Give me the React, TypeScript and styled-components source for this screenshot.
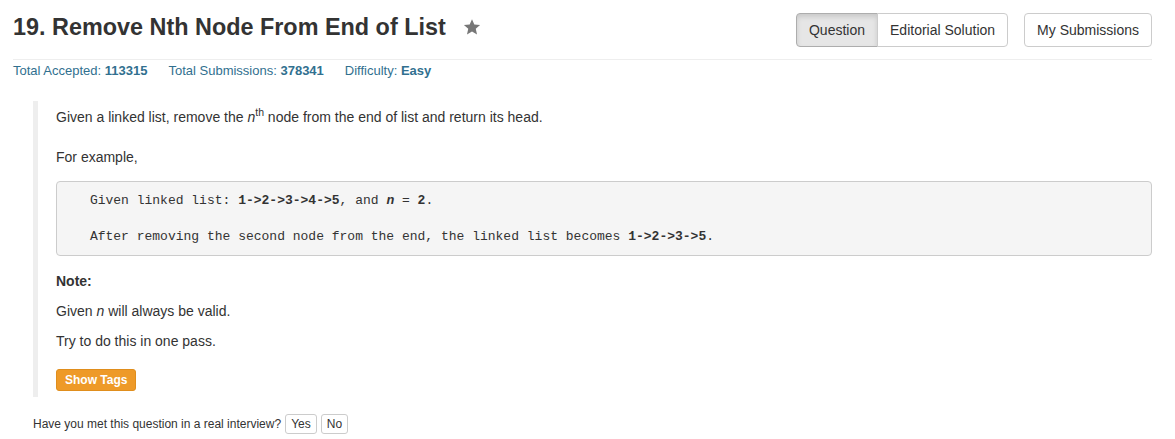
import styled, { createGlobalStyle } from "styled-components";

const GlobalStyle = createGlobalStyle`
  body {
    margin: 0;
    background: #fff;
    color: #333;
    font-family: "Liberation Sans", Arial, sans-serif;
    font-size: 14px;
  }
`;

const Page = styled.div`
  padding: 0 23px 0 13px;
`;

const Header = styled.div`
  display: flex;
  justify-content: space-between;
  align-items: flex-start;
  padding-top: 13px;
  padding-bottom: 12px;
  border-bottom: 1px solid #eee;
`;

const Title = styled.h3`
  margin: 0;
  display: flex;
  align-items: center;
  font-size: 23.4px;
  font-weight: bold;
  line-height: 28px;
  color: #333;
`;

const Star = styled.svg`
  margin-left: 17px;
  width: 18px;
  height: 18px;
`;

const Actions = styled.div`
  display: flex;
  gap: 16px;
`;

const Group = styled.div`
  display: flex;
`;

const Btn = styled.button<{ $active?: boolean; $pos?: "left" | "right" | "solo" }>`
  font-family: inherit;
  font-size: 14px;
  line-height: 20px;
  padding: 6px 12px;
  color: #333;
  cursor: pointer;
  background: ${(p) => (p.$active ? "#e6e6e6" : "#fff")};
  border: 1px solid ${(p) => (p.$active ? "#adadad" : "#ccc")};
  box-shadow: ${(p) => (p.$active ? "inset 0 3px 5px rgba(0,0,0,0.125)" : "none")};
  border-radius: ${(p) =>
    p.$pos === "left" ? "4px 0 0 4px" : p.$pos === "right" ? "0 4px 4px 0" : "4px"};
  margin-left: ${(p) => (p.$pos === "right" ? "-1px" : "0")};
`;

const Stats = styled.div`
  display: flex;
  gap: 21px;
  margin-top: 2px;
  font-size: 13px;
  line-height: 18px;
  color: #31708f;

  b {
    font-weight: bold;
  }
`;

const Quote = styled.blockquote`
  margin: 21px 0 17px 20px;
  padding: 6px 0 6px 18px;
  border-left: 5px solid #eee;
  font-size: 14px;
`;

const P = styled.p<{ $gap?: number }>`
  margin: 0 0 ${(p) => p.$gap ?? 10}px;
  line-height: 20px;

  sup {
    font-size: 75%;
    line-height: 0;
  }
`;

const Pre = styled.pre`
  margin: 14px 0 15px;
  padding: 9.5px;
  background: #f5f5f5;
  border: 1px solid #ccc;
  border-radius: 4px;
  font-family: "Liberation Mono", "DejaVu Sans Mono", monospace;
  font-size: 13px;
  line-height: 18px;
  color: #333;
  white-space: pre;
`;

const TagButton = styled.button`
  display: block;
  margin-top: 18px;
  font-family: inherit;
  font-size: 12px;
  font-weight: bold;
  line-height: 18px;
  padding: 1px 8px;
  color: #fff;
  background: #ee9a28;
  border: 1px solid #e08e1d;
  border-radius: 3px;
  cursor: pointer;
`;

const Interview = styled.div`
  display: flex;
  align-items: center;
  gap: 4px;
  margin-left: 20px;
  font-size: 12px;
`;

const SmallBtn = styled.button`
  font-family: inherit;
  font-size: 12px;
  line-height: 16px;
  padding: 1px 5px;
  color: #333;
  background: #fff;
  border: 1px solid #ccc;
  border-radius: 3px;
  cursor: pointer;
`;

export default function App() {
  return (
    <Page>
      <GlobalStyle />
      <Header>
        <Title>
          19. Remove Nth Node From End of List
          <Star viewBox="0 0 24 24">
            <polygon
              points="12,1.5 15.1,8.6 22.8,9.2 17,14.3 18.7,21.9 12,17.9 5.3,21.9 7,14.3 1.2,9.2 8.9,8.6"
              fill="#777"
            />
          </Star>
        </Title>
        <Actions>
          <Group>
            <Btn $active $pos="left">Question</Btn>
            <Btn $pos="right">Editorial Solution</Btn>
          </Group>
          <Btn $pos="solo">My Submissions</Btn>
        </Actions>
      </Header>
      <Stats>
        <span>
          Total Accepted: <b>113315</b>
        </span>
        <span>
          Total Submissions: <b>378341</b>
        </span>
        <span>
          Difficulty: <b>Easy</b>
        </span>
      </Stats>
      <Quote>
        <P $gap={20}>
          Given a linked list, remove the <i>n</i>
          <sup>th</sup> node from the end of list and return its head.
        </P>
        <P>For example,</P>
        <Pre>
          {"   Given linked list: "}
          <b>1-&gt;2-&gt;3-&gt;4-&gt;5</b>
          {", and "}
          <b>
            <i>n</i>
          </b>
          {" = "}
          <b>2</b>
          {".\n\n   After removing the second node from the end, the linked list becomes "}
          <b>1-&gt;2-&gt;3-&gt;5</b>
          {"."}
        </Pre>
        <P>
          <b>Note:</b>
        </P>
        <P>
          Given <i>n</i> will always be valid.
        </P>
        <P $gap={0}>Try to do this in one pass.</P>
        <TagButton>Show Tags</TagButton>
      </Quote>
      <Interview>
        <span>Have you met this question in a real interview?</span>
        <SmallBtn>Yes</SmallBtn>
        <SmallBtn>No</SmallBtn>
      </Interview>
    </Page>
  );
}
